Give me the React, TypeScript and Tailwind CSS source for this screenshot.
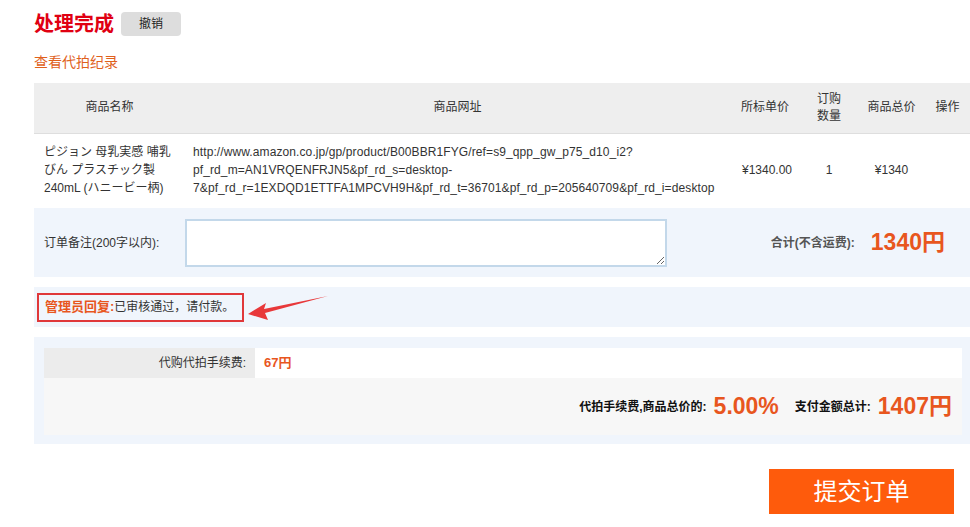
const orange = "text-[#e8561e]";

const App = () => {
  return (
    <div className="relative min-h-[527px] w-[970px] bg-white pl-[34px] font-['Liberation_Sans','Noto_Sans_CJK_SC',sans-serif] text-[12px] text-[#333]">
      <div className="flex items-center gap-[7px] pt-[10px]">
        <h1 className="text-[20px] font-bold leading-[28px] text-[#e00012]">处理完成</h1>
        <button className="h-[24px] w-[60px] rounded-[4px] bg-[#dddddd] text-[12px] text-[#222]">撤销</button>
      </div>
      <a className="mt-[15px] block text-[14px] leading-[18px] text-[#e0611c]">查看代拍纪录</a>

      <table className="mt-[12px] w-[936px] table-fixed border-collapse">
        <colgroup>
          <col className="w-[151px]" />
          <col className="w-[545px]" />
          <col className="w-[70px]" />
          <col className="w-[58px]" />
          <col className="w-[67px]" />
          <col className="w-[45px]" />
        </colgroup>
        <thead>
          <tr className="h-[50px] border-b border-[#dedede] bg-[#eeeeee] text-[12px] leading-[17px] text-[#333]">
            <th className="font-normal">商品名称</th>
            <th className="font-normal">商品网址</th>
            <th className="font-normal">所标单价</th>
            <th className="font-normal">订购<br />数量</th>
            <th className="font-normal">商品总价</th>
            <th className="font-normal">操作</th>
          </tr>
        </thead>
        <tbody>
          <tr className="h-[74px] leading-[18px]">
            <td className="pl-[10px] pr-[6px] align-middle">ピジョン 母乳実感 哺乳びん プラスチック製 240mL (ハニービー柄)</td>
            <td className="break-all pl-[8px] align-middle tracking-[0.1px]">
              http://www.amazon.co.jp/gp/product/B00BBR1FYG/ref=s9_qpp_gw_p75_d10_i2?
              <br />pf_rd_m=AN1VRQENFRJN5&amp;pf_rd_s=desktop-
              <br />7&amp;pf_rd_r=1EXDQD1ETTFA1MPCVH9H&amp;pf_rd_t=36701&amp;pf_rd_p=205640709&amp;pf_rd_i=desktop
            </td>
            <td className="pl-[4px] text-center">¥1340.00</td>
            <td className="text-center">1</td>
            <td className="text-center">¥1340</td>
            <td />
          </tr>
        </tbody>
      </table>

      <div className="mt-px flex h-[69px] w-[936px] items-center bg-[#f0f5fc] pl-[10px]">
        <span className="w-[141px]">订单备注(200字以内):</span>
        <textarea className="h-[48px] w-[482px] resize-y border-2 border-[#c3d8ea] bg-white" />
        <span className="ml-auto font-bold text-[#555]">合计(不含运费):</span>
        <span className={`ml-[16px] mr-[25px] text-[23px] font-bold ${orange}`}>1340円</span>
      </div>

      <div className="mt-[10px] flex h-[40px] w-[936px] items-center bg-[#f0f5fc] pl-[3px]">
        <div className="flex h-[29px] w-[207px] items-center border-2 border-[#e0383a] pl-[6px]">
          <span className={`text-[13px] font-bold ${orange}`}>管理员回复:</span>
          <span>已审核通过，请付款。</span>
        </div>
      </div>

      <div className="mt-[10px] w-[936px] bg-[#f0f5fc] pb-[9px] pl-[10px] pr-[8px] pt-[11px]">
        <div className="bg-[#f7f7f7]">
          <div className="flex h-[30px] items-center">
            <div className="flex h-full w-[211px] items-center justify-end bg-[#ececec] pr-[9px]">代购代拍手续费:</div>
            <div className="flex h-full flex-1 items-center bg-white pl-[9px]">
              <span className={`text-[13px] font-bold ${orange}`}>67円</span>
            </div>
          </div>
          <div className="flex h-[57px] items-center justify-end pr-[10px] text-[#111]">
            <span className="font-bold">代拍手续费,商品总价的:</span>
            <span className={`ml-[7px] text-[23px] font-bold ${orange}`}>5.00%</span>
            <span className="ml-[16px] font-bold">支付金额总计:</span>
            <span className={`ml-[7px] text-[23px] font-bold ${orange}`}>1407円</span>
          </div>
        </div>
      </div>

      <div className="mt-[25px] flex w-[920px] justify-end">
        <button className="h-[45px] w-[185px] bg-[#fe5b0c] text-[24px] text-white">提交订单</button>
      </div>

      <svg className="absolute left-[244px] top-[294px]" width="90" height="26" viewBox="0 0 90 26">
        <polygon points="4,20 22,9 20,15 84,2 21,19 24,26" fill="#e8383a" />
      </svg>
    </div>
  );
};

export default App;
